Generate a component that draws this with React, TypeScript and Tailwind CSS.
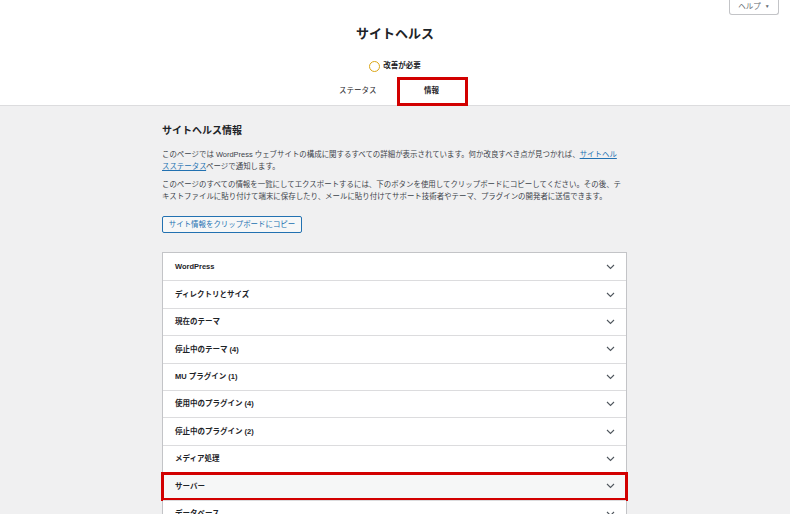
import { ReactNode } from "react";

const font = "[font-family:'Liberation_Sans','Noto_Sans_CJK_JP',sans-serif]";

const sections = [
  "WordPress",
  "ディレクトリとサイズ",
  "現在のテーマ",
  "停止中のテーマ (4)",
  "MU プラグイン (1)",
  "使用中のプラグイン (4)",
  "停止中のプラグイン (2)",
  "メディア処理",
  "サーバー",
  "データベース",
];

function Chevron() {
  return (
    <svg width="9" height="6" viewBox="0 0 9 6" fill="none" className="shrink-0">
      <path d="M1 1l3.5 3.5L8 1" stroke="#50575e" strokeWidth="1.1" />
    </svg>
  );
}

function Marked({ children, className }: { children: ReactNode; className: string }) {
  return (
    <div className={`pointer-events-none absolute border-[3px] border-[#d20000] ${className}`}>
      {children}
    </div>
  );
}

function AccordionRow({ title, highlight }: { title: string; highlight: boolean }) {
  return (
    <div
      className={`relative flex h-[27.4px] items-center justify-between border-t border-[#dcdcde] pl-[12px] pr-[11px] first:border-t-0 ${
        highlight ? "bg-[#f6f7f7]" : "bg-white"
      }`}
    >
      <span className="text-[7.5px] font-semibold leading-none text-[#1d2327]">{title}</span>
      <Chevron />
      {highlight && <Marked className="-left-[2px] -right-[2px] -top-[1px] bottom-[-1.6px]">{null}</Marked>}
    </div>
  );
}

export default function App() {
  return (
    <div className={`relative min-h-[514px] w-[790px] overflow-hidden bg-[#f0f0f1] ${font}`}>
      <div className="absolute right-[11px] top-0 flex h-[15px] w-[50px] items-center justify-center gap-[4px] rounded-b-[3px] border border-t-0 border-[#c3c4c7] bg-white text-[7.5px] text-[#646970]">
        <span>ヘルプ</span>
        <span className="text-[5px]">▼</span>
      </div>

      <header className="flex h-[106px] flex-col items-center border-b border-[#dcdcde] bg-white">
        <h1 className="mt-[26px] text-[13px] font-semibold leading-[16px] text-[#1d2327]">サイトヘルス</h1>
        <div className="mt-[16px] flex h-[16px] items-center gap-[3px]">
          <span className="h-[11px] w-[11px] rounded-full border-[1.5px] border-[#dba617]" />
          <span className="text-[7.5px] font-semibold text-[#1d2327]">改善が必要</span>
        </div>
        <nav className="ml-[5px] mt-[3px] flex h-[28px] text-[7.5px] text-[#1d2327]">
          <span className="flex w-[70px] items-center pl-[11px]">ステータス</span>
          <span className="relative flex w-[69px] items-center justify-center pr-[2px] font-semibold">
            情報
            <Marked className="inset-y-[0px] -left-[1px] -right-[1px] -bottom-[1px]">{null}</Marked>
          </span>
        </nav>
      </header>

      <main className="ml-[162px] w-[465px] pt-[19px] text-[#3c434a]">
        <h2 className="text-[10px] font-semibold leading-[12px] text-[#1d2327]">サイトヘルス情報</h2>
        <p className="mt-[12px] text-[7.45px] leading-[11.5px]">
          このページでは WordPress ウェブサイトの構成に関するすべての詳細が表示されています。何か改良すべき点が見つかれば、
          <a className="text-[#2271b1] underline">
            サイトヘル
            <br />
            スステータス
          </a>
          ページで通知します。
        </p>
        <p className="mt-[7px] text-[7.45px] leading-[11.5px]">
          このページのすべての情報を一覧にしてエクスポートするには、下のボタンを使用してクリップボードにコピーしてください。その後、テキストファイルに貼り付けて端末に保存したり、メールに貼り付けてサポート技術者やテーマ、プラグインの開発者に送信できます。
        </p>
        <button className="mt-[14px] flex h-[17px] w-[140px] items-center justify-center rounded-[2px] border border-[#2271b1] bg-[#f6f7f7] text-[7.45px] text-[#2271b1]">
          サイト情報をクリップボードにコピー
        </button>

        <div className="mt-[19px] border border-b-0 border-[#c3c4c7]">
          {sections.map((s) => (
            <AccordionRow key={s} title={s} highlight={s === "サーバー"} />
          ))}
        </div>
      </main>
    </div>
  );
}
